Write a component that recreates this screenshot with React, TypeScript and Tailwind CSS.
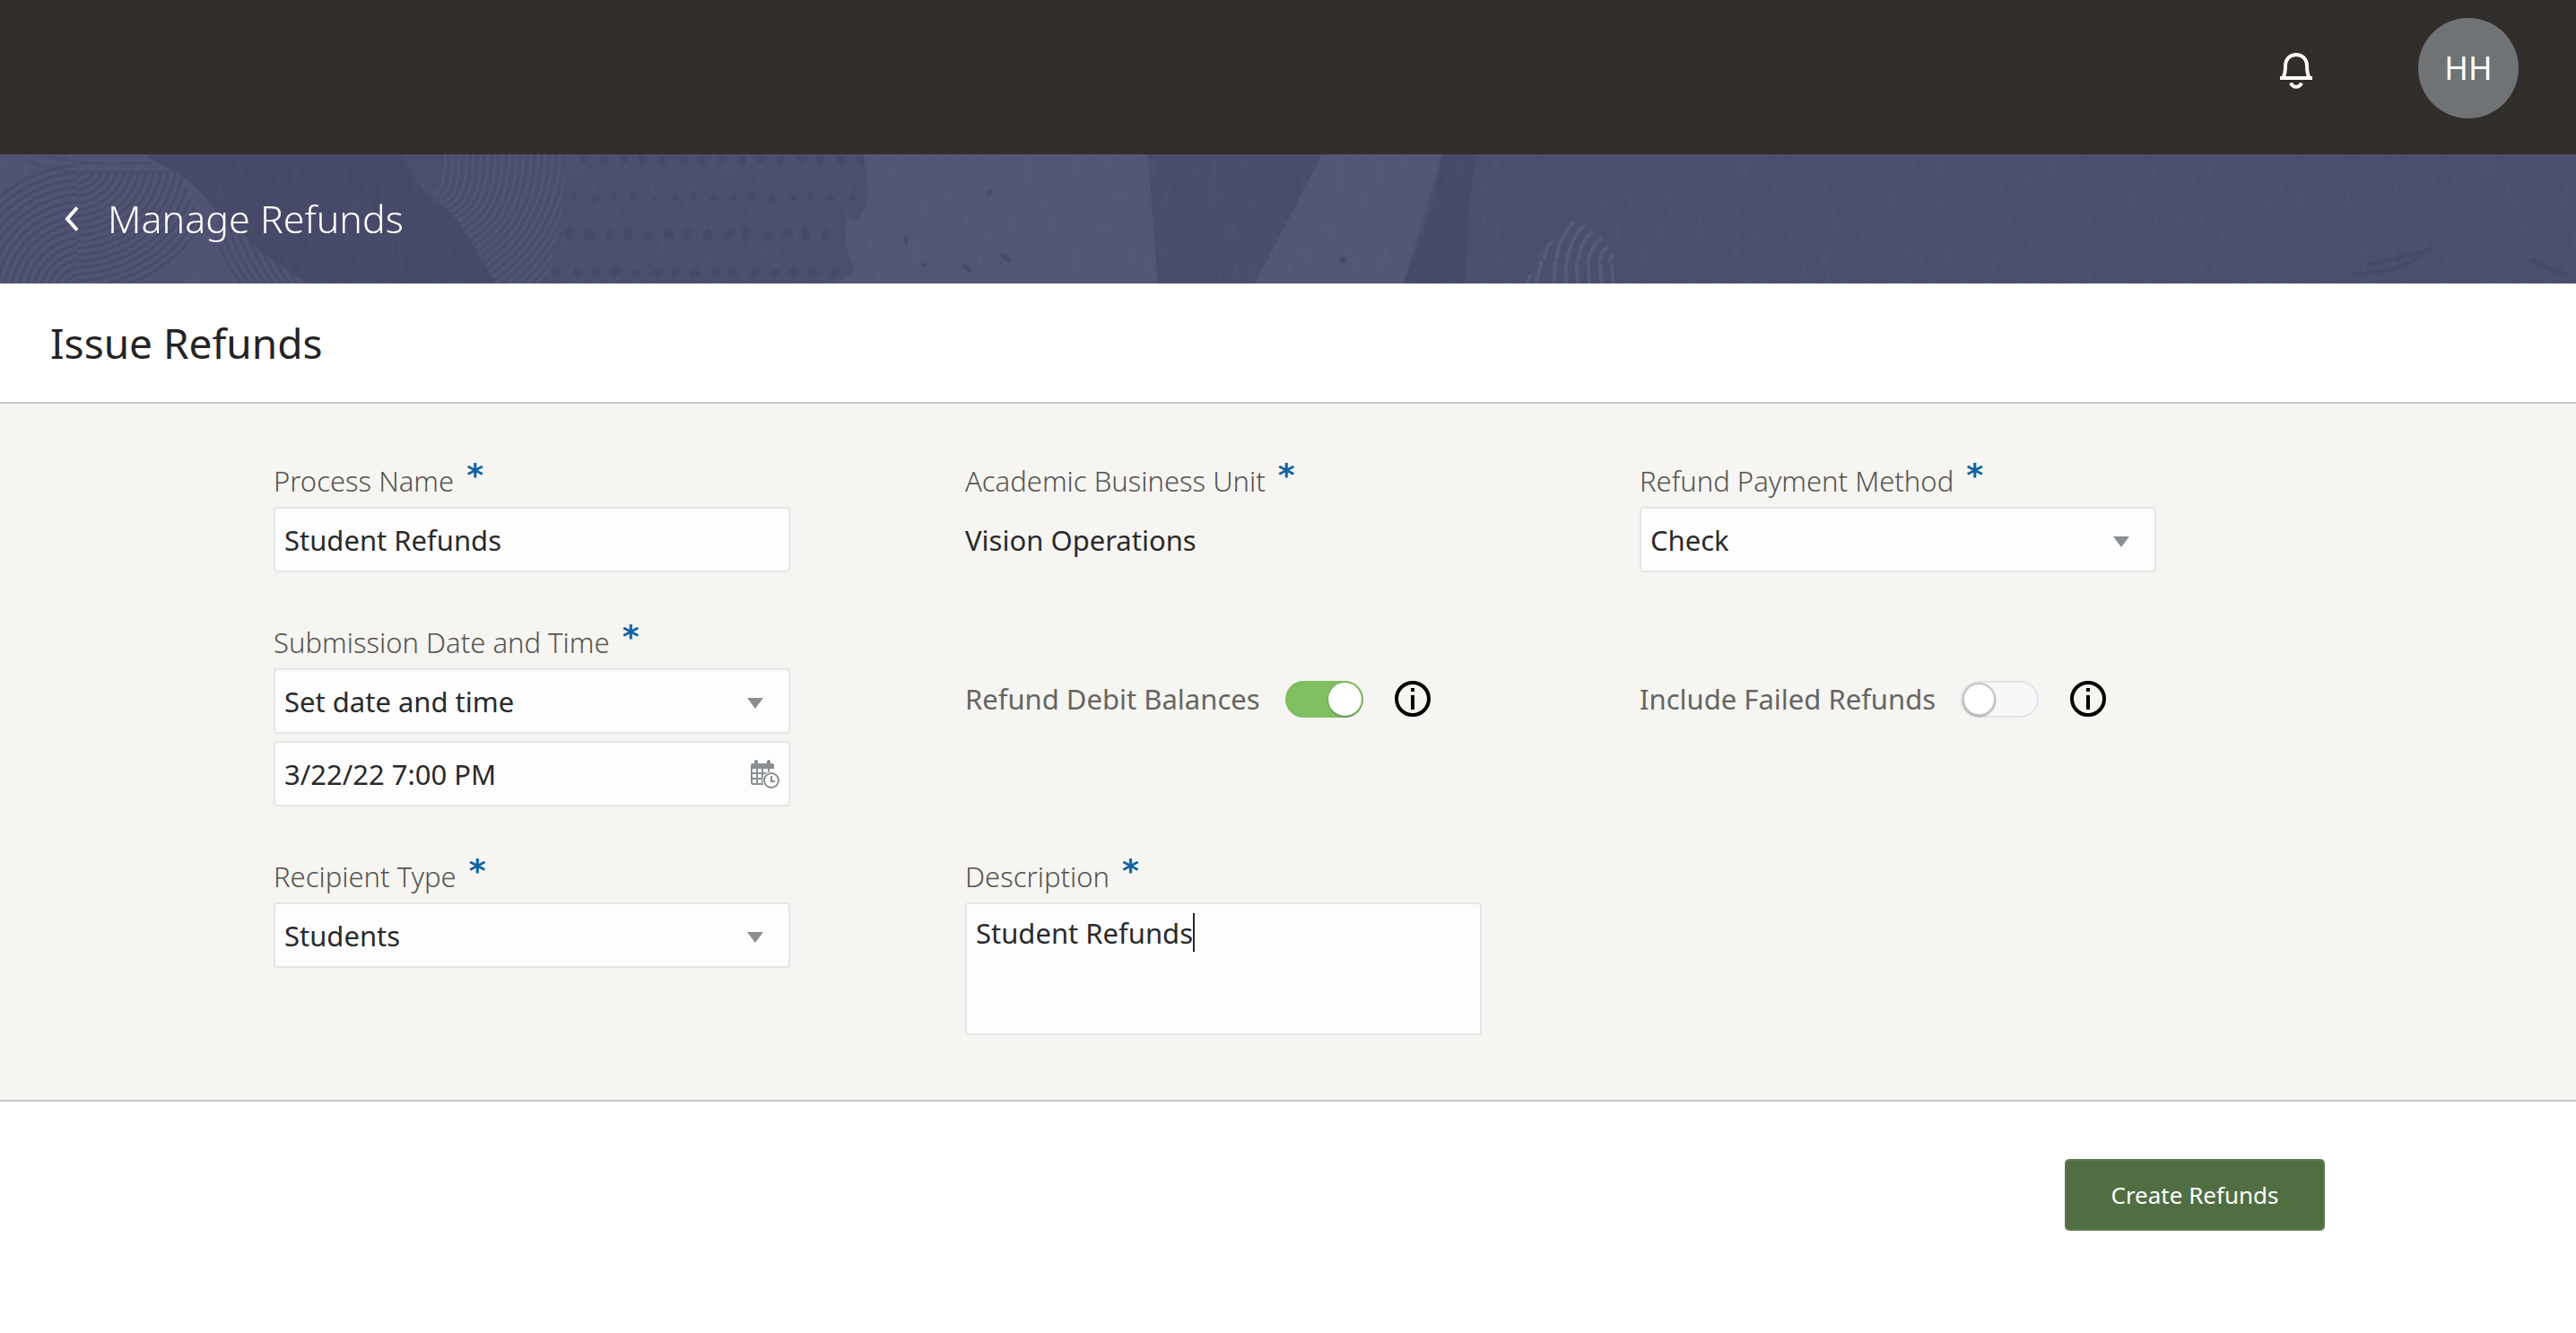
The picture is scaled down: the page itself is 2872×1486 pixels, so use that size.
import { useState, type ReactNode } from "react";

const FIELD =
  "w-full rounded-[4px] border-2 border-[#e4e6e7] bg-[#fdfdfd] px-[10px] text-[31px] leading-[42px] text-[#2a2a2a] outline-none";

function rings(from: number, to: number, step: number) {
  const out: number[] = [];
  for (let r = from; r <= to; r += step) out.push(r);
  return out;
}

const DOT_ROWS = [
  { y: 5, rx: 4, ry: 6, from: 650 },
  { y: 47, rx: 3, ry: 5, from: 640 },
  { y: 88, rx: 5, ry: 7, from: 634 },
  { y: 131, rx: 5, ry: 6, from: 620 },
];

function BannerArt() {
  return (
    <svg
      className="absolute inset-0 h-full w-full"
      viewBox="0 0 2872 144"
      preserveAspectRatio="xMinYMid slice"
      aria-hidden="true"
    >
      <defs>
        <filter id="grain" x="0" y="0" width="100%" height="100%">
          <feTurbulence type="fractalNoise" baseFrequency="0.12 0.03" numOctaves="3" seed="4" />
          <feColorMatrix values="0 0 0 0 0.2  0 0 0 0 0.2  0 0 0 0 0.35  1.4 0 0 0 -0.6" />
        </filter>
        <clipPath id="leftLeaf">
          <path d="M0 0H160C175 10 190 15 202 24C225 40 232 52 245 68C262 80 275 92 288 106C310 122 325 132 343 144H0Z" />
        </clipPath>
        <clipPath id="leftFar">
          <path d="M0 0H86V144H0Z" />
        </clipPath>
        <clipPath id="leftNear">
          <path d="M86 20H200L236 102L216 144H86Z" />
        </clipPath>
        <clipPath id="leftLow">
          <path d="M236 96L225 144H345L250 60Z" />
        </clipPath>
        <clipPath id="shell">
          <path d="M447 0H630C630 40 626 70 622 90L608 144H552C540 120 530 100 518 84C500 60 478 40 447 0Z" />
        </clipPath>
      </defs>
      <rect width="2872" height="144" fill="#4b4e6d" />
      <path d="M150 0H447C460 30 480 50 500 62C520 90 540 120 552 144H330Z" fill="#464968" />
      <g clipPath="url(#leftLeaf)" fill="none">
        <rect width="345" height="144" fill="#505372" />
        <g clipPath="url(#leftFar)" stroke="#464968" strokeWidth="3" opacity="0.75">
          {rings(20, 150, 8).map((r) => (
            <ellipse key={r} cx="96" cy="160" rx={r} ry={r} />
          ))}
        </g>
        <g clipPath="url(#leftNear)" stroke="#464968" strokeWidth="3" opacity="0.75">
          {rings(12, 170, 8).map((r) => (
            <ellipse key={r} cx="80" cy="8" rx={r} ry={r * 0.9} />
          ))}
        </g>
        <g clipPath="url(#leftLow)" stroke="#464968" strokeWidth="3" opacity="0.7">
          {rings(0, 64, 9).map((d) => (
            <path key={d} d={`M${236 + d} 70C${240 + d} 100 ${255 + d} 125 ${272 + d} 150`} />
          ))}
        </g>
        <path d="M20 0C40 14 60 18 90 20H190M50 0C70 8 90 10 110 10H170" stroke="#484b6a" strokeWidth="3" opacity="0.6" />
      </g>
      <g clipPath="url(#shell)" fill="none">
        <rect x="440" width="200" height="144" fill="#4b4e6d" />
        <g stroke="#555978" strokeWidth="3" opacity="0.7">
          {rings(10, 200, 8).map((r) => (
            <path key={r} d={`M${486 + r} -10C${488 + r} 60 ${478 + r * 0.8} ${40 + r * 0.7} ${440 + r * 0.3} ${30 + r}`} />
          ))}
        </g>
      </g>
      <g fill="#424564" opacity="0.5">
        {DOT_ROWS.map((row) =>
          rings(0, 320, 22).map((d, i) => (
            <ellipse
              key={`${row.y}-${d}`}
              cx={row.from + d + (i % 3)}
              cy={row.y + ((i * 5) % 3)}
              rx={row.rx + (i % 2)}
              ry={row.ry - (i % 3)}
            />
          )),
        )}
      </g>
      <path d="M963 0C966 20 970 40 966 55C962 70 950 75 946 95C944 112 956 120 950 132C942 136 936 140 932 144H1291L1280 0Z" fill="#525574" />
      <path d="M946 70C938 90 944 120 956 128L968 80Z" fill="#525574" />
      <path d="M1280 0L1291 144H1399L1474 0Z" fill="#494c6b" />
      <path d="M1474 0L1399 144H1565L1608 0Z" fill="#525574" />
      <path d="M1608 0L1596 60L1565 144H1633L1638 55L1645 0Z" fill="#464968" />
      <g fill="#444766" opacity="0.7">
        <ellipse cx="1103" cy="43" rx="3" ry="3" />
        <ellipse cx="1121" cy="115" rx="7" ry="3" transform="rotate(35 1121 115)" />
        <ellipse cx="1078" cy="127" rx="6" ry="3" transform="rotate(35 1078 127)" />
        <ellipse cx="1030" cy="123" rx="3" ry="2" />
        <ellipse cx="1498" cy="118" rx="4" ry="4" />
        <ellipse cx="1010" cy="96" rx="2" ry="6" />
      </g>
      <g fill="none" stroke="#575b7a" strokeWidth="4" strokeLinecap="round">
        {["M1722 115Q1724 102 1730 98", "M1735 116Q1740 90 1754 76", "M1747 118Q1752 92 1766 80", "M1759 118Q1763 96 1774 88", "M1771 119Q1774 102 1784 95", "M1783 119Q1785 108 1792 104", "M1794 119L1798 112"].map((d) => (
          <path key={d} d={d} />
        ))}
        {["M1701 146L1706 136", "M1712 146L1718 121", "M1732 146L1734 121", "M1746 146V121", "M1759 146L1758 123", "M1772 146L1771 122", "M1786 146L1784 124", "M1799 146L1797 124"].map((d) => (
          <path key={d} d={d} />
        ))}
      </g>
      <g fill="none" stroke="#434665" strokeWidth="4" strokeLinecap="round" opacity="0.6">
        <path d="M2640 123Q2680 116 2712 104" />
        <path d="M2622 134Q2674 132 2700 112" />
        <path d="M2822 118Q2840 128 2862 134" />
      </g>
      <rect width="2872" height="144" filter="url(#grain)" opacity="0.12" />
    </svg>
  );
}

function BellIcon() {
  return (
    <svg className="h-10 w-9" viewBox="0 0 36 40" fill="none" stroke="#fff" strokeWidth="4" aria-hidden="true">
      <path d="M0 28H36" />
      <path d="M3.5 27.5C6 23 6 18 6 14C6 7 11 2 18 2C25 2 30 7 30 14C30 18 30 23 32.5 27.5" />
      <path d="M12 33.5C14.5 39.2 21.5 39.2 24 33.5" />
    </svg>
  );
}

function CalendarClockIcon() {
  return (
    <svg className="h-8 w-8" viewBox="0 0 32 32" fill="none" aria-hidden="true">
      <g fill="#8a8e91">
        <rect x="4" y="0" width="4" height="7" rx="2" />
        <rect x="18" y="0" width="4" height="7" rx="2" />
        <path d="M2 4H24Q26 4 26 6V10H0V6Q0 4 2 4Z" />
      </g>
      <path d="M1 9V25Q1 27 3 27H20M7 9V27M13 9V27M20 9V27M1 15H22M1 21H22" stroke="#8a8e91" strokeWidth="2" />
      <circle cx="23" cy="23" r="10" fill="#fdfdfd" />
      <circle cx="23" cy="23" r="8" stroke="#8a8e91" strokeWidth="2" />
      <path d="M23 18V24H27" stroke="#8a8e91" strokeWidth="2" />
    </svg>
  );
}

function InfoIcon() {
  return (
    <svg className="h-10 w-10" viewBox="0 0 40 40" fill="none" aria-hidden="true">
      <circle cx="20" cy="20" r="18" stroke="#000" strokeWidth="4" />
      <path d="M18 8H22V12H18ZM18 16H22V32H18Z" fill="#000" />
    </svg>
  );
}

function Field({ label, htmlFor, children }: { label: string; htmlFor: string; children: ReactNode }) {
  return (
    <div className="flex w-full max-w-[576px] flex-col gap-2">
      <label htmlFor={htmlFor} className="flex h-[42px] items-start gap-[14px] text-[31px] leading-[42px] font-light text-[#545452]">
        {label}
        <span className="font-['DejaVu_Sans',sans-serif] text-[36px] leading-[30px] font-bold text-[#1163a4]">*</span>
      </label>
      {children}
    </div>
  );
}

function Select({ id, options }: { id: string; options: string[] }) {
  return (
    <div className="relative">
      <select id={id} className={`${FIELD} block h-[73px] appearance-none`}>
        {options.map((o) => (
          <option key={o}>{o}</option>
        ))}
      </select>
      <svg className="pointer-events-none absolute top-[33px] right-[30px] h-3 w-[18px]" viewBox="0 0 18 12" aria-hidden="true">
        <path d="M0 0H18L9 12Z" fill="#8a8e91" />
      </svg>
    </div>
  );
}

function Toggle({ id, label, initial }: { id: string; label: string; initial: boolean }) {
  const [on, setOn] = useState(initial);
  return (
    <div className="flex h-[42px] items-center">
      <label htmlFor={id} className="text-[31px] leading-[42px] whitespace-nowrap text-[#656563]">
        {label}
      </label>
      <input
        id={id}
        type="checkbox"
        role="switch"
        checked={on}
        onChange={(e) => setOn(e.target.checked)}
        className="ml-7 flex h-[41px] w-[87px] shrink-0 appearance-none items-center rounded-full border-2 border-[#e4e6e8] bg-[#f8f8fa] before:block before:h-[37px] before:w-[37px] before:rounded-full before:border-2 before:border-[#c3c5c6] before:bg-white before:shadow-[0_1px_2px_rgba(0,0,0,0.35)] before:content-[''] checked:justify-end checked:border-[#7fbe61] checked:bg-[#7fbe61] checked:before:border-white"
      />
      <button type="button" aria-label={`About ${label}`} className="ml-[35px] shrink-0">
        <InfoIcon />
      </button>
    </div>
  );
}

export default function App() {
  return (
    <div className="min-h-screen bg-white font-['Noto_Sans',sans-serif]">
      <header className="flex h-[172px] items-start justify-end gap-[118px] bg-[#312d2a] pt-5 pr-16">
        <button type="button" aria-label="Notifications" className="mt-[39px]">
          <BellIcon />
        </button>
        <button type="button" className="flex h-28 w-28 items-center justify-center rounded-full bg-[#6f7375] text-[36px] leading-none text-white">
          HH
        </button>
      </header>

      <nav className="relative h-36 overflow-hidden">
        <BannerArt />
        <a href="#refunds" className="relative flex h-full items-center gap-8 pl-[72px] text-[43px] font-light text-white">
          <svg className="h-7 w-4" viewBox="0 0 16 28" fill="none" stroke="#fff" strokeWidth="4" aria-hidden="true">
            <path d="M14 1.5L3 14L14 26.5" />
          </svg>
          Manage Refunds
        </a>
      </nav>

      <main>
        <div className="flex h-[134px] items-center border-b-2 border-[#c8c8ca] pl-14">
          <h1 className="text-[46px] leading-[62px] text-[#242424]">Issue Refunds</h1>
        </div>

        <form onSubmit={(e) => e.preventDefault()}>
          <div className="grid grid-cols-[771fr_752fr_576fr] gap-y-[57px] border-b-2 border-[#c8c8c8] bg-[#f6f5f1] pt-[65px] pr-[468px] pb-[72px] pl-[305px]">
            <Field label="Process Name" htmlFor="process">
              <input id="process" type="text" defaultValue="Student Refunds" className={`${FIELD} h-[73px]`} />
            </Field>
            <Field label="Academic Business Unit" htmlFor="unit">
              <output id="unit" className="flex h-[73px] items-center text-[31px] leading-[42px] text-[#2a2a2a]">
                Vision Operations
              </output>
            </Field>
            <Field label="Refund Payment Method" htmlFor="method">
              <Select id="method" options={["Check", "Electronic"]} />
            </Field>

            <Field label="Submission Date and Time" htmlFor="timing">
              <Select id="timing" options={["Set date and time", "As soon as possible"]} />
              <div className="relative">
                <input type="text" aria-label="Date and time" defaultValue="3/22/22 7:00 PM" className={`${FIELD} block h-[73px]`} />
                <button type="button" aria-label="Select date and time" className="absolute top-[21px] right-[12px]">
                  <CalendarClockIcon />
                </button>
              </div>
            </Field>
            <div className="pt-[63px]">
              <Toggle id="debit" label="Refund Debit Balances" initial={true} />
            </div>
            <div className="pt-[63px]">
              <Toggle id="failed" label="Include Failed Refunds" initial={false} />
            </div>

            <Field label="Recipient Type" htmlFor="recipient">
              <Select id="recipient" options={["Students", "Sponsors"]} />
            </Field>
            <Field label="Description" htmlFor="description">
              <div className="relative">
                <textarea id="description" defaultValue="Student Refunds" className={`${FIELD} block h-[148px] resize-none pt-[11px]`} />
                <span className="pointer-events-none absolute top-3 left-[254px] h-[43px] w-[2px] bg-[#2a2a2a]" />
              </div>
            </Field>
          </div>

          <div className="flex justify-end pt-16 pr-[280px]">
            <button type="submit" className="h-20 w-[290px] rounded-[5px] border-2 border-[#5c7a4f] bg-[#516e43] text-[26px] text-white">
              Create Refunds
            </button>
          </div>
        </form>
      </main>
    </div>
  );
}
